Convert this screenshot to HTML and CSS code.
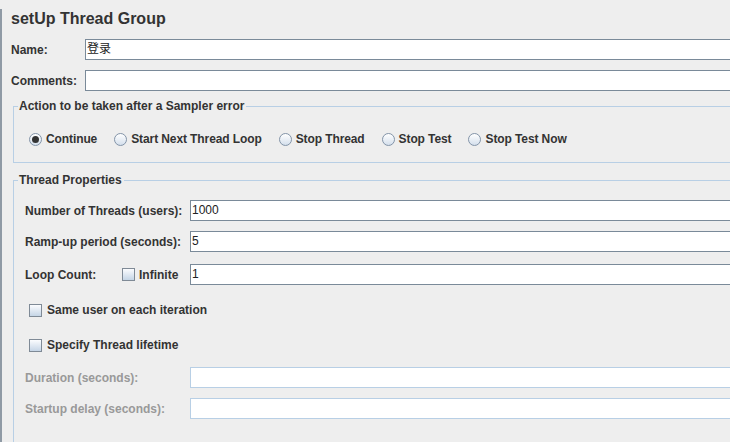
FILE: index.html
```html
<!DOCTYPE html>
<html>
<head>
<meta charset="utf-8">
<link rel="stylesheet" href="styles.css">
</head>
<body>
<div class="page">
  <h1 class="title">setUp Thread Group</h1>
  <div class="row row-name">
    <span class="lbl lbl-top">Name:</span>
    <div class="field">登录</div>
  </div>
  <div class="row row-comments">
    <span class="lbl lbl-top">Comments:</span>
    <div class="field"></div>
  </div>

  <fieldset class="group group-action">
    <legend>Action to be taken after a Sampler error</legend>
    <div class="group-body action-body">
      <div class="radios">
        <span class="opt"><span class="radio on"></span>Continue</span>
        <span class="opt"><span class="radio"></span>Start Next Thread Loop</span>
        <span class="opt"><span class="radio"></span>Stop Thread</span>
        <span class="opt"><span class="radio"></span>Stop Test</span>
        <span class="opt"><span class="radio"></span>Stop Test Now</span>
      </div>
    </div>
  </fieldset>

  <fieldset class="group group-thread">
    <legend>Thread Properties</legend>
    <div class="group-body thread-body">
      <div class="row prow prow-1">
        <span class="lbl lbl-prop">Number of Threads (users):</span>
        <div class="field">1000</div>
      </div>
      <div class="row prow prow-2">
        <span class="lbl lbl-prop">Ramp-up period (seconds):</span>
        <div class="field">5</div>
      </div>
      <div class="row prow prow-3">
        <span class="lbl lbl-prop lbl-loop">
          <span class="lbl-loop-text">Loop Count:</span>
          <span class="check-inline"><span class="checkbox"></span>Infinite</span>
        </span>
        <div class="field">1</div>
      </div>
      <div class="check-row check-row-1"><span class="checkbox"></span>Same user on each iteration</div>
      <div class="check-row check-row-2"><span class="checkbox"></span>Specify Thread lifetime</div>
      <div class="row prow prow-4">
        <span class="lbl lbl-prop disabled">Duration (seconds):</span>
        <div class="field field-disabled"></div>
      </div>
      <div class="row prow prow-5">
        <span class="lbl lbl-prop disabled">Startup delay (seconds):</span>
        <div class="field field-disabled"></div>
      </div>
    </div>
  </fieldset>
</div>
</body>
</html>
```
FILE: styles.css
```css
html, body {
  margin: 0;
  padding: 0;
  background: #eeeeee;
  overflow: hidden;
}
body {
  width: 730px;
  height: 442px;
  font-family: "Liberation Sans", Arial, "Noto Sans CJK SC", sans-serif;
  font-size: 12px;
  color: #333333;
}
.page {
  width: 780px;
  height: 442px;
  border-left: 2px solid #8f9aa5;
  box-sizing: border-box;
}
.title {
  margin: 9px 0 0 9px;
  font-size: 16px;
  line-height: 20px;
  font-weight: bold;
  color: #333333;
}
.row {
  display: flex;
  align-items: center;
}
.row-name {
  margin: 10px 0 0 9px;
}
.row-comments {
  margin: 10px 0 0 9px;
}
.lbl {
  font-weight: bold;
  line-height: 14px;
  white-space: nowrap;
  flex: none;
}
.lbl-top {
  width: 74px;
}
.field {
  flex: 1;
  height: 21px;
  box-sizing: border-box;
  background: #ffffff;
  border: 1px solid #7a8a99;
  border-right: none;
  padding-left: 1px;
  line-height: 19px;
  font-size: 12px;
  font-family: "Liberation Sans", Arial, "Noto Sans CJK SC", sans-serif;
  color: #222222;
}
.field-disabled {
  border-color: #b8cfe5;
}
.group {
  margin: 0 0 0 11px;
  border: 1px solid #b8cfe5;
  border-right: none;
  padding: 0 0 0 4px;
  min-width: 0;
}
.group legend {
  font-weight: bold;
  line-height: 14px;
  padding: 0 2px 0 1px;
  margin: 0;
  color: #333333;
}
.group-action {
  margin-top: 8px;
}
.action-body {
  padding: 19px 0 16px 11px;
}
.group-thread {
  margin-top: 10px;
}
.thread-body {
  padding: 13px 0 40px 7px;
}
.radios {
  display: flex;
  align-items: center;
  gap: 17px;
  height: 14px;
}
.opt {
  display: flex;
  align-items: center;
  font-weight: bold;
  white-space: nowrap;
  letter-spacing: -0.1px;
}
.radio {
  width: 11px;
  height: 11px;
  border-radius: 50%;
  border: 1px solid #8394a8;
  background: linear-gradient(#ffffff, #d4dfec);
  margin-right: 4px;
  position: relative;
  flex: none;
}
.radio.on::after {
  content: "";
  position: absolute;
  left: 2px;
  top: 2px;
  width: 7px;
  height: 7px;
  border-radius: 50%;
  background: #333333;
}
.lbl-prop {
  width: 165px;
}
.lbl-loop {
  display: flex;
  align-items: center;
}
.lbl-loop-text {
  width: 97px;
}
.check-inline {
  display: flex;
  align-items: center;
}
.checkbox {
  width: 11px;
  height: 11px;
  border: 1px solid #7f8a96;
  background: linear-gradient(#fbfcfe, #c5d5e6);
  margin-right: 4px;
  flex: none;
}
.check-row .checkbox {
  margin-right: 5px;
}
.prow-2 {
  margin-top: 10px;
}
.prow-3 {
  margin-top: 12px;
}
.check-row {
  display: flex;
  align-items: center;
  font-weight: bold;
  height: 14px;
  margin-left: 4px;
}
.check-row-1 {
  margin-top: 18px;
}
.check-row-2 {
  margin-top: 21px;
}
.prow-4 {
  margin-top: 15px;
}
.prow-5 {
  margin-top: 10px;
}
.disabled {
  color: #999999;
}
```
